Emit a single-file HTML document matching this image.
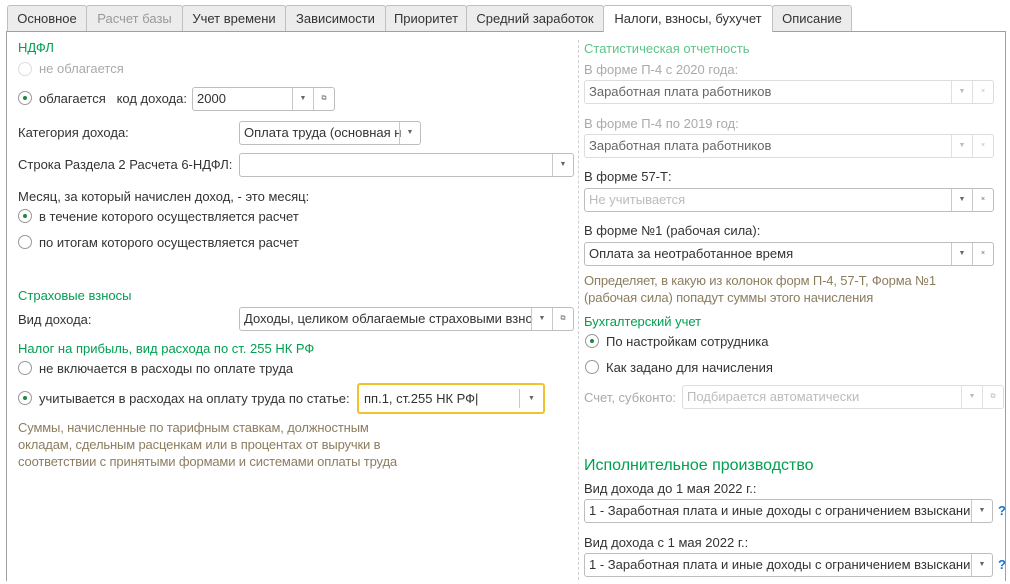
<!DOCTYPE html><html><head><meta charset="utf-8"><style>
body{margin:0;width:1010px;height:584px;background:#fff;font-family:"Liberation Sans",Arial,sans-serif;font-size:13px;color:#333;position:relative;overflow:hidden}
.a{position:absolute;white-space:nowrap}
.frame{position:absolute;left:6px;top:31px;width:998px;height:549px;border:1px solid #a0a0a0;border-bottom:none}
.tab{position:absolute;top:5px;height:26px;line-height:25px;background:#ececec;border:1px solid #c0c0c0;border-bottom:none;border-radius:3px 3px 0 0;text-align:center;box-sizing:border-box;color:#333}
.g{color:#00a050}
.gl{color:#5dc48a}
.gr{color:#aaa}
.br{color:#8c7d5f;letter-spacing:-0.15px}
.inp{position:absolute;height:24px;border:1px solid #bdbdbd;border-radius:3px;box-sizing:border-box;background:#fff;line-height:22px;padding-left:4px;overflow:hidden;white-space:nowrap}
.inp.dis{border-color:#ddd;color:#666}
.btn{position:absolute;top:0;bottom:0;border-left:1px solid #c8c8c8;width:20px;text-align:center;font-size:7px;color:#666;line-height:22px}
.r{position:absolute;width:14px;height:14px;border:1px solid #999;border-radius:50%;box-sizing:border-box;background:#fff}
.r.on::after{content:"";position:absolute;left:4px;top:4px;width:4px;height:4px;border-radius:50%;background:#1a8a3a}
.r.d{border-color:#ddd}
.q{color:#1a75c8;font-weight:bold}
</style></head><body>
<div class="frame"></div>
<div class="tab" style="left:7px;width:80px">Основное</div>
<div class="tab gr" style="left:86px;width:97px;color:#999">Расчет базы</div>
<div class="tab" style="left:182px;width:104px">Учет времени</div>
<div class="tab" style="left:285px;width:101px">Зависимости</div>
<div class="tab" style="left:385px;width:82px">Приоритет</div>
<div class="tab" style="left:466px;width:138px">Средний заработок</div>
<div class="tab" style="left:603px;width:170px;background:#fff;height:27px">Налоги, взносы, бухучет</div>
<div class="tab" style="left:772px;width:80px">Описание</div>
<div class="a" style="left:578px;top:40px;height:540px;border-left:1px dashed #d0d0d0"></div>

<div class="a g" style="left:18px;top:40px">НДФЛ</div>
<div class="r d" style="left:18px;top:62px"></div><div class="a gr" style="left:39px;top:61px">не облагается</div>
<div class="r on" style="left:18px;top:91px"></div><div class="a" style="left:39px;top:91px">облагается&nbsp;&nbsp; код дохода:</div>
<div class="inp" style="left:192px;top:87px;width:143px">2000<div class="btn" style="right:21px">▼</div><div class="btn" style="right:0">⧉</div></div>
<div class="a" style="left:18px;top:125px">Категория дохода:</div>
<div class="inp" style="left:239px;top:121px;width:182px">Оплата труда (основная н<div class="btn" style="right:0">▼</div></div>
<div class="a" style="left:18px;top:157px">Строка Раздела 2 Расчета 6-НДФЛ:</div>
<div class="inp" style="left:239px;top:153px;width:335px"><div class="btn" style="right:0">▼</div></div>
<div class="a" style="left:18px;top:189px">Месяц, за который начислен доход, - это месяц:</div>
<div class="r on" style="left:18px;top:209px"></div><div class="a" style="left:39px;top:209px">в течение которого осуществляется расчет</div>
<div class="r" style="left:18px;top:235px"></div><div class="a" style="left:39px;top:235px">по итогам которого осуществляется расчет</div>

<div class="a g" style="left:18px;top:288px">Страховые взносы</div>
<div class="a" style="left:18px;top:312px">Вид дохода:</div>
<div class="inp" style="left:239px;top:307px;width:335px">Доходы, целиком облагаемые страховыми взно<div class="btn" style="right:21px">▼</div><div class="btn" style="right:0">⧉</div></div>
<div class="a g" style="left:18px;top:341px">Налог на прибыль, вид расхода по ст. 255 НК РФ</div>
<div class="r" style="left:18px;top:361px"></div><div class="a" style="left:39px;top:361px">не включается в расходы по оплате труда</div>
<div class="r on" style="left:18px;top:391px"></div><div class="a" style="left:39px;top:391px">учитывается в расходах на оплату труда по статье:</div>
<div class="inp" style="left:357px;top:383px;width:188px;height:31px;border:2px solid #f2c12e;line-height:27px;padding-left:5px">пп.1, ст.255 НК РФ|<div class="btn" style="right:0;width:23px;top:4px;bottom:4px;line-height:19px">▼</div></div>
<div class="a br" style="left:18px;top:419px;line-height:17px">Суммы, начисленные по тарифным ставкам, должностным<br>окладам, сдельным расценкам или в процентах от выручки в<br>соответствии с принятыми формами и системами оплаты труда</div>

<div class="a gl" style="left:584px;top:41px">Статистическая отчетность</div>
<div class="a gr" style="left:584px;top:62px">В форме П-4 с 2020 года:</div>
<div class="inp dis" style="left:584px;top:80px;width:410px">Заработная плата работников<div class="btn" style="right:21px;color:#bbb;border-color:#e0e0e0">▼</div><div class="btn" style="right:0;color:#bbb;border-color:#e0e0e0">×</div></div>
<div class="a gr" style="left:584px;top:116px">В форме П-4 по 2019 год:</div>
<div class="inp dis" style="left:584px;top:134px;width:410px">Заработная плата работников<div class="btn" style="right:21px;color:#bbb;border-color:#e0e0e0">▼</div><div class="btn" style="right:0;color:#bbb;border-color:#e0e0e0">×</div></div>
<div class="a" style="left:584px;top:169px">В форме 57-Т:</div>
<div class="inp" style="left:584px;top:188px;width:410px;color:#bbb">Не учитывается<div class="btn" style="right:21px">▼</div><div class="btn" style="right:0">×</div></div>
<div class="a" style="left:584px;top:223px">В форме №1 (рабочая сила):</div>
<div class="inp" style="left:584px;top:242px;width:410px">Оплата за неотработанное время<div class="btn" style="right:21px">▼</div><div class="btn" style="right:0">×</div></div>
<div class="a br" style="left:584px;top:272px;line-height:17px">Определяет, в какую из колонок форм П-4, 57-Т, Форма №1<br>(рабочая сила) попадут суммы этого начисления</div>
<div class="a g" style="left:584px;top:314px">Бухгалтерский учет</div>
<div class="r on" style="left:585px;top:334px"></div><div class="a" style="left:606px;top:334px">По настройкам сотрудника</div>
<div class="r" style="left:585px;top:360px"></div><div class="a" style="left:606px;top:360px">Как задано для начисления</div>
<div class="a gr" style="left:584px;top:390px">Счет, субконто:</div>
<div class="inp dis" style="left:682px;top:385px;width:322px;color:#bbb">Подбирается автоматически<div class="btn" style="right:21px;color:#bbb;border-color:#e0e0e0">▼</div><div class="btn" style="right:0;color:#bbb;border-color:#e0e0e0">⧉</div></div>
<div class="a g" style="left:584px;top:457px;font-size:16px">Исполнительное производство</div>
<div class="a" style="left:584px;top:481px">Вид дохода до 1 мая 2022 г.:</div>
<div class="inp" style="left:584px;top:499px;width:409px">1 - Заработная плата и иные доходы с ограничением взыскани<div class="btn" style="right:0">▼</div></div>
<div class="a q" style="left:998px;top:503px">?</div>
<div class="a" style="left:584px;top:535px">Вид дохода с 1 мая 2022 г.:</div>
<div class="inp" style="left:584px;top:553px;width:409px">1 - Заработная плата и иные доходы с ограничением взыскани<div class="btn" style="right:0">▼</div></div>
<div class="a q" style="left:998px;top:557px">?</div>
</body></html>
